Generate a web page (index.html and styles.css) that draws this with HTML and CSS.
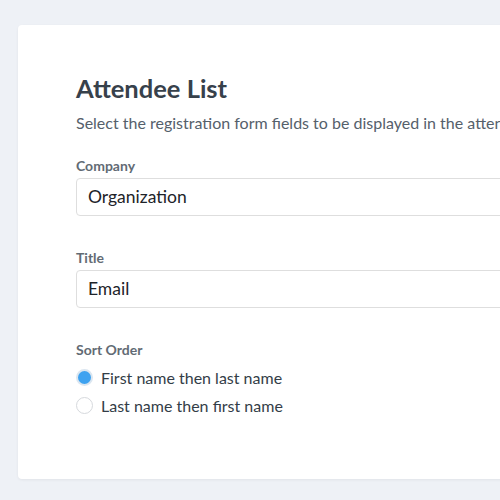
FILE: index.html
```html
<!DOCTYPE html>
<html lang="en">
<head>
    <meta charset="UTF-8">
    <meta name="viewport" content="width=device-width, initial-scale=1.0">
    <title>Attendee List Settings</title>
    <link rel="stylesheet" href="styles.css">
</head>
<body>

<div class="card">
    <h1>Attendee List</h1>
    <p class="subtitle">Select the registration form fields to be displayed in the attendee list.</p>

    <label class="field-label" for="company">Company</label>
    <div class="select-box" id="company">Organization</div>

    <label class="field-label" for="title">Title</label>
    <div class="select-box" id="title">Email</div>

    <div class="field-label sort-label">Sort Order</div>
    <label class="radio-row">
        <input type="radio" name="sort" checked>
        <span class="radio"></span>
        First name then last name
    </label>
    <label class="radio-row">
        <input type="radio" name="sort">
        <span class="radio"></span>
        Last name then first name
    </label>
</div>

</body>
</html>
```

FILE: styles.css
```css
body {
    font-family: Lato, 'Open Sans', Arial, sans-serif;
    background-color: #eef1f6;
    margin: 0;
    padding: 25px 0 0 18px;
    overflow: hidden;
    height: 100vh;
    box-sizing: border-box;
    color: #333d47;
}

.card {
    background-color: #fff;
    border-radius: 4px;
    box-shadow: 0 1px 3px rgba(0, 0, 0, 0.06);
    width: 700px;
    height: 454px;
    box-sizing: border-box;
    padding: 48px 58px;
}

h1 {
    font-size: 25.5px;
    font-weight: 700;
    margin: 0 0 10px;
    line-height: 30px;
    color: #37414b;
}

.subtitle {
    font-size: 16px;
    color: #55606b;
    margin: 0 0 25px;
    line-height: 20px;
    white-space: nowrap;
}

.field-label {
    display: block;
    font-size: 14px;
    font-weight: 700;
    color: #626b74;
    margin-bottom: 4px;
    line-height: 16px;
}

.sort-label {
    margin-bottom: 5px;
}

.select-box {
    border: 1px solid #dedede;
    border-radius: 4px;
    height: 38px;
    box-sizing: border-box;
    padding: 0 11px;
    line-height: 36px;
    font-size: 17.5px;
    color: #1d2329;
    margin-bottom: 34px;
}

.radio-row {
    display: flex;
    align-items: center;
    gap: 8px;
    font-size: 16px;
    color: #333d47;
    height: 28px;
    cursor: pointer;
}

.radio-row input {
    display: none;
}

.radio {
    width: 17px;
    height: 17px;
    border-radius: 50%;
    border: 1px solid #d6d9dd;
    box-sizing: border-box;
    background-color: #fff;
}

.radio-row input:checked + .radio {
    background-color: #3ea2f0;
    border: 2px solid #dbe6f0;
}
```
